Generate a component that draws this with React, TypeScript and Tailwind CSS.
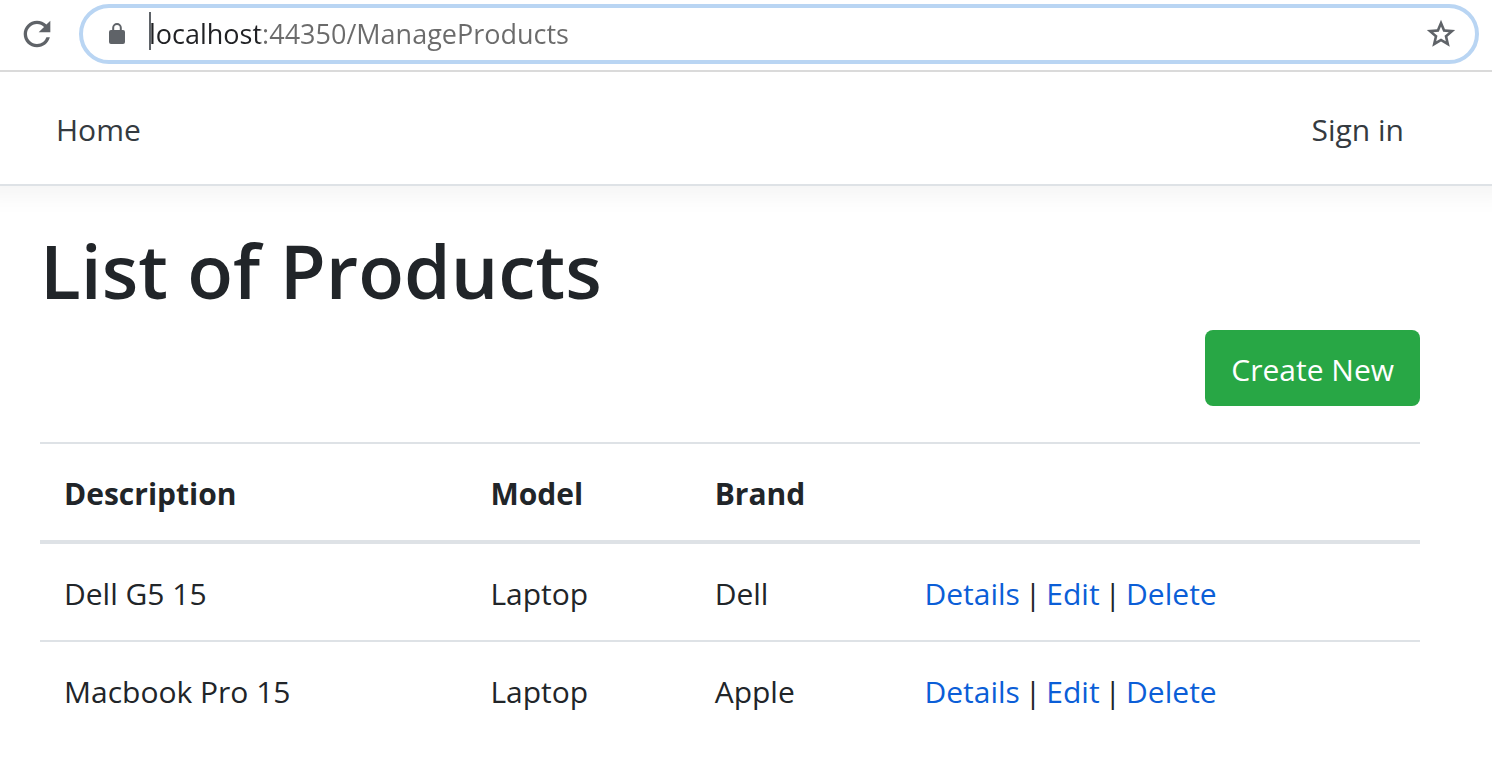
import { MdRefresh } from "react-icons/md";

type Product = { description: string; model: string; brand: string };

const products: Product[] = [
  { description: "Dell G5 15", model: "Laptop", brand: "Dell" },
  { description: "Macbook Pro 15", model: "Laptop", brand: "Apple" },
];

const linkClass = "text-[#0b5ed7] hover:underline";
const cellClass = "px-6 pt-[26px] pb-[22px]";

function LockIcon() {
  return (
    <svg width="24" height="24" viewBox="0 0 24 24" fill="currentColor" className="shrink-0" aria-hidden="true">
      <path d="M18 8h-1.200V5.800a4.800 4.800 0 0 0-9.600 0V8H6a2 2 0 0 0-2 2v10a2 2 0 0 0 2 2h12a2 2 0 0 0 2-2V10a2 2 0 0 0-2-2zM9.200 8V5.800a2.800 2.800 0 0 1 5.600 0V8z" />
    </svg>
  );
}

function StarIcon() {
  return (
    <svg width="34" height="34" viewBox="0 0 24 24" fill="currentColor" aria-hidden="true">
      <path
        fillRule="evenodd"
        d="M22 9.240l-7.190-.62L12 2 9.190 8.630 2 9.240l5.460 4.730L5.820 21 12 17.270 18.180 21l-1.630-7.030zM12 15.100l-3.400 2.050.9-3.870-3-2.600 3.950-.34L12 6.700l1.550 3.650 3.950.34-3 2.600.9 3.870z"
      />
    </svg>
  );
}

function AddressBar() {
  return (
    <header className="relative z-10 flex items-center border-b-2 border-[#dadada] bg-white pt-1 pr-[13px] pb-1.5 pl-[17px]">
      <button type="button" aria-label="Reload" className="mr-[22px] text-[#5f6368]">
        <MdRefresh size={40} />
      </button>
      <div className="flex h-[60px] flex-1 items-center rounded-full border-4 border-[#b9d5f3] pr-[17px] pl-[22px] text-[#5f6368]">
        <LockIcon />
        <div className="relative ml-5 flex flex-1 items-center">
          <span className="absolute -top-1 left-0 h-[38px] w-0.5 bg-[#5f6368]" />
          <input
            type="text"
            aria-label="Address"
            defaultValue="localhost:44350/ManageProducts"
            className="w-full bg-[linear-gradient(to_right,#202124_111px,#6b6b6b_111px)] bg-clip-text text-[27px] leading-9 text-transparent outline-none"
          />
        </div>
        <button type="button" aria-label="Bookmark this page">
          <StarIcon />
        </button>
      </div>
    </header>
  );
}

function NavBar() {
  return (
    <nav className="flex justify-between border-b-2 border-[#dee2e6] pt-[34px] pr-[88px] pb-[30px] pl-14 leading-[48px] text-[#343a40] shadow-[0_-16px_24px_24px_rgba(0,0,0,0.05)]">
      <a href="#home">Home</a>
      <a href="#sign-in">Sign in</a>
    </nav>
  );
}

function ProductTable() {
  return (
    <table className="mt-9 w-full table-fixed border-collapse text-left leading-[48px]">
      <colgroup>
        <col className="w-[30.9%]" />
        <col className="w-[16.25%]" />
        <col className="w-[15.2%]" />
        <col />
      </colgroup>
      <thead>
        <tr className="border-t-2 border-b-4 border-t-[#dee2e6] border-b-[#dee2e6]">
          <th className={cellClass}>Description</th>
          <th className={cellClass}>Model</th>
          <th className={cellClass}>Brand</th>
          <th className={cellClass} />
        </tr>
      </thead>
      <tbody>
        {products.map((p) => (
          <tr key={p.description} className="border-b-2 border-[#dee2e6] last:border-b-0">
            <td className={cellClass}>{p.description}</td>
            <td className={cellClass}>{p.model}</td>
            <td className={cellClass}>{p.brand}</td>
            <td className={cellClass}>
              <div className="flex gap-[5px]">
                <a href="#details" className={linkClass}>Details</a>
                <span>|</span>
                <a href="#edit" className={linkClass}>Edit</a>
                <span>|</span>
                <a href="#delete" className={linkClass}>Delete</a>
              </div>
            </td>
          </tr>
        ))}
      </tbody>
    </table>
  );
}

export default function App() {
  return (
    <div className="bg-white font-['Open_Sans','Noto_Sans',sans-serif] text-[30px] text-[#212529]">
      <AddressBar />
      <NavBar />
      <main className="pt-9 pr-[72px] pl-10">
        <h1 className="text-[75px] leading-[96px] font-semibold">List of Products</h1>
        <div className="mt-3 flex justify-end">
          <button type="button" className="rounded-lg bg-[#28a745] px-[26px] pt-4 pb-3 leading-[48px] text-white">
            Create New
          </button>
        </div>
        <ProductTable />
      </main>
    </div>
  );
}
